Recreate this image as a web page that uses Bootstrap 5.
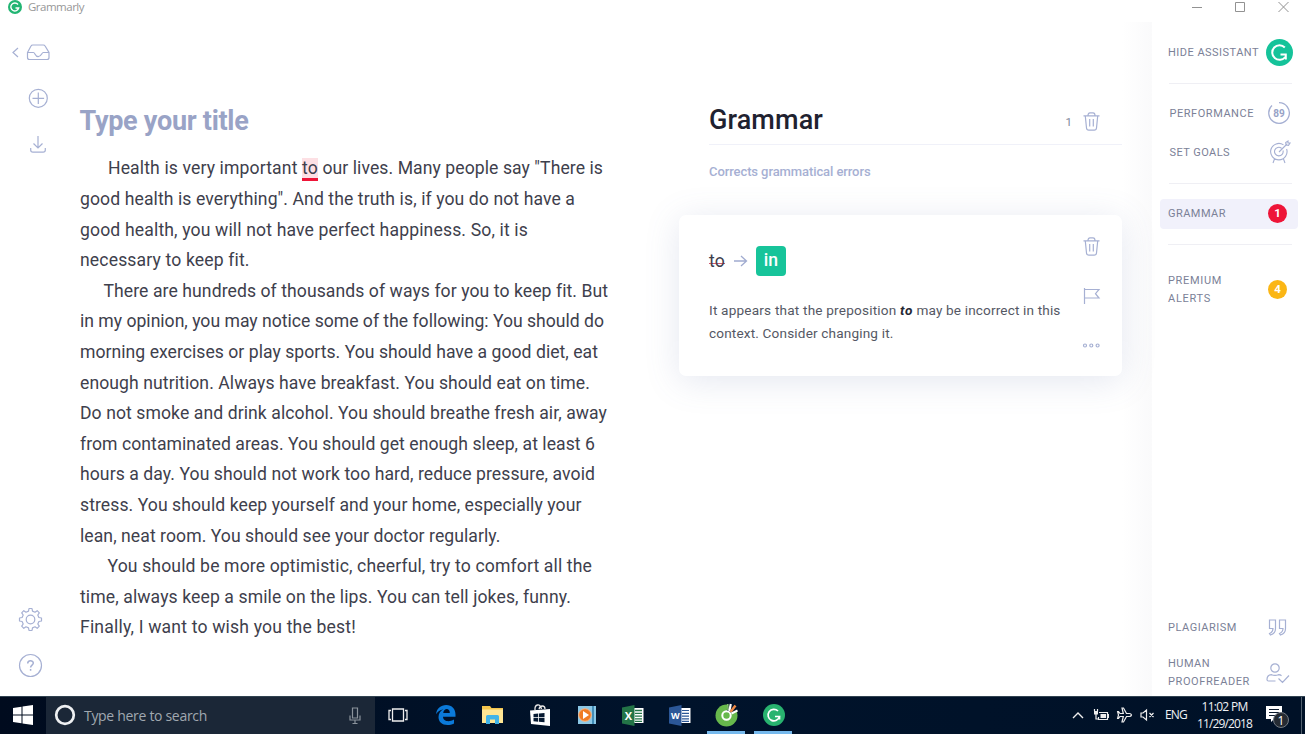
<!DOCTYPE html>
<html lang="en">
<head>
<meta charset="utf-8">
<title>Grammarly</title>
<link href="https://cdn.jsdelivr.net/npm/bootstrap@5.3.0/dist/css/bootstrap.min.css" rel="stylesheet">
<style>
:root{--lav:#a6b0d3;--ink:#3e404c}
body{font-family:Roboto,"Liberation Sans",sans-serif;width:1306px;height:734px;overflow:hidden;background:#fff;color:var(--ink)}
svg{display:block;flex:none;overflow:visible}
[data-w]{display:inline-block;white-space:pre}
.titlebar{height:22px;font:11.5px/14px "Open Sans",sans-serif;color:#979797;padding-left:8px}
.titlebar .wins{margin-right:17px}
.workspace{height:674px}
.rail{width:80px;padding-top:20px;color:var(--lav)}
.editor{width:599px}
.doc-title{font-weight:700;font-size:27px;line-height:32px;color:#99a3c6;margin:83px 0 0 -.5px}
.doc-line{height:30.6px;line-height:30.6px;font-size:17.6px;white-space:pre}
.doc-body{padding-top:16.4px}
.wrong{background:#fde0e4;border-bottom:3px solid #ee1538;line-height:20px;height:23px;vertical-align:baseline}
.panel{width:443px}
.panel-head{margin:81px 0 0 30px;height:42px;border-bottom:1px solid #f0f1f9}
.panel-head h1{font-size:27px;font-weight:500;line-height:34px;color:#1f2230;margin:0}
.panel-sub{font-size:13px;font-weight:500;line-height:20px;color:#a6b0d3;margin:17px 0 0 30px}
.alert-card{margin-top:33px;height:161px;border:0;border-radius:7px;box-shadow:0 5px 34px rgba(95,110,165,.17);padding:30px 22px 0 30px;background:#fff}
.fix{width:30px;height:30px;border-radius:4px;background:#17c49a;color:#fff;font-size:17.6px;font-weight:500;line-height:28px}
.struck{font-size:17.6px;line-height:24px;background:linear-gradient(#cf5872,#cf5872) 0 14px/100% 1px no-repeat}
.explain{font-size:13.6px;line-height:23px;color:#555864;margin-top:23px}
.fade-edge{width:30px;background:linear-gradient(90deg,#fff,#fafafb)}
.assistant{width:154px;font-size:11px;color:#7b8197}
.assistant [data-w]{padding-top:1px}
.rule{height:1px;background:#efeff4;margin:0 14px 0 17px}
.srow{padding-left:16px;padding-right:17px}
.count{width:19px;height:19px;border-radius:50%;color:#fff;font-size:11.5px;font-weight:700;line-height:19px}
.current{height:30px;margin:0 8px;background:#f1f1fb;border-radius:4px;padding:0 11px 1px 8px}
.stack{line-height:18px}
.stack [data-w]{padding-top:0}
.taskbar{height:38px;width:1305px;background:linear-gradient(90deg,#000b1e,#00132b 50%,#001127);border-top:1px solid #314351;color:#e8ebef;font-family:"Open Sans",sans-serif}
.searchbox{width:329px;height:37px;background:#1b2737;padding:0 14px 1px 8px;font-size:14px;color:#a0a8b0}
.app{width:46.9px;height:37px;padding:0 0 1px 1px}
.open i{position:absolute;left:4px;right:5px;bottom:0;height:3px;background:#76b9ed}
.tray{font-size:12px;line-height:17px;color:#f0f2f5;padding-bottom:2px}
</style>
</head>
<body>
<header class="titlebar d-flex align-items-start">
  <svg width="14" height="14" viewBox="0 0 14 14"><circle cx="7" cy="7" r="7" fill="#22b573"/><path d="M10 4.500A4 4 0 1 0 10.700 8H7.500" fill="none" stroke="#fff" stroke-width="1.400"/></svg>
  <span class="ms-1" style="padding-left:2px"><span data-w="56">Grammarly</span></span>
  <svg class="wins ms-auto" width="98" height="14" fill="none" stroke="#929292"><path d="M1 7.500h10M44.500 2.500h9v9h-9zM87.500 2l10 10m0-10-10 10"/></svg>
</header>

<main class="workspace d-flex">
  <nav class="rail d-flex flex-column">
    <svg width="50" height="20" viewBox="0 0 50 20" fill="none" stroke="currentColor" stroke-width="1.200"><path d="m18 6-5 4.500 5 4.500M27.500 10.500 31 4q.5-1 1.800-1h10.500q1.300 0 1.800 1l3.900 6.500v5q0 2-2 2H29.500q-2 0-2-2zh6c1.500 0 1.500 4.200 4.700 4.200s3.500-4.200 5-4.200h5.800"/></svg>
    <svg style="margin:26px 0 0 28px" width="20" height="20" fill="none" stroke="currentColor" stroke-width="1.200"><circle cx="10.300" cy="10.300" r="9"/><path d="M10.300 4.500v11.500M4.500 10.300h11.600"/></svg>
    <svg style="margin:27px 0 0 28px" width="20" height="20" fill="none" stroke="currentColor" stroke-width="1.200"><path d="M10 1v12M5.500 8.500 10 13l4.500-4.500M2.700 13v2q0 2.200 2.200 2.200h10.200q2.200 0 2.200-2.200v-2"/></svg>
    <svg class="mt-auto" style="margin-left:18px" width="25" height="25" viewBox="-12.500 -12.500 25 25" fill="none" stroke="currentColor" stroke-width="1.200"><circle r="4.300"/><path stroke-linejoin="round" d="M-2-8.400-1.500-11h3L2-8.400 4.500-7.300 6.700-8.800 8.800-6.700 7.300-4.500 8.400-2 11-1.500v3L8.400 2 7.300 4.500 8.800 6.700 6.700 8.800 4.500 7.300 2 8.400 1.500 11h-3L-2 8.400-4.500 7.300-6.700 8.800-8.800 6.700-7.300 4.500-8.400 2-11 1.500v-3L-8.400-2-7.300-4.500-8.800-6.700-6.700-8.800-4.500-7.300z"/></svg>
    <svg style="margin:21px 0 18px 18px" width="25" height="25" fill="none" stroke="currentColor" stroke-width="1.200"><circle cx="12.500" cy="12.500" r="11"/><path stroke-width="1.500" d="M9.700 10.500c0-3.500 5.600-3.500 5.600-.4 0 2-2.700 2-2.700 4.300M12.600 16v1.700"/></svg>
  </nav>

  <article class="editor">
    <h2 class="doc-title"><span data-w="169">Type your title</span></h2>
    <div class="doc-body">
      <div class="doc-line" style="padding-left:28px"><span data-w="194">Health is very important </span><span class="wrong" data-w="16">to</span><span data-w="285"> our lives. Many people say "There is</span></div>
      <div class="doc-line"><span data-w="495">good health is everything". And the truth is, if you do not have a</span></div>
      <div class="doc-line"><span data-w="448">good health, you will not have perfect happiness. So, it is</span></div>
      <div class="doc-line"><span data-w="169">necessary to keep fit.</span></div>
      <div class="doc-line" style="padding-left:23.500px"><span data-w="504">There are hundreds of thousands of ways for you to keep fit. But</span></div>
      <div class="doc-line"><span data-w="524">in my opinion, you may notice some of the following: You should do</span></div>
      <div class="doc-line"><span data-w="518">morning exercises or play sports. You should have a good diet, eat</span></div>
      <div class="doc-line"><span data-w="510">enough nutrition. Always have breakfast. You should eat on time.</span></div>
      <div class="doc-line"><span data-w="527">Do not smoke and drink alcohol. You should breathe fresh air, away</span></div>
      <div class="doc-line"><span data-w="515">from contaminated areas. You should get enough sleep, at least 6</span></div>
      <div class="doc-line"><span data-w="515">hours a day. You should not work too hard, reduce pressure, avoid</span></div>
      <div class="doc-line"><span data-w="501.500">stress. You should keep yourself and your home, especially your</span></div>
      <div class="doc-line"><span data-w="420.500">lean, neat room. You should see your doctor regularly.</span></div>
      <div class="doc-line" style="padding-left:27.500px"><span data-w="484.500">You should be more optimistic, cheerful, try to comfort all the</span></div>
      <div class="doc-line"><span data-w="491">time, always keep a smile on the lips. You can tell jokes, funny.</span></div>
      <div class="doc-line"><span data-w="276">Finally, I want to wish you the best!</span></div>
    </div>
  </article>

  <section class="panel">
    <div class="panel-head d-flex">
      <h1><span data-w="114">Grammar</span></h1>
      <span class="ms-auto" style="font-size:11.500px;line-height:38px;color:#7f879c;margin-right:11px">1</span>
      <svg style="margin:9px 22px 0 0" width="17" height="19" fill="none" stroke="#a6b0d3" stroke-width="1.200"><path id="bin" d="M.5 3.800h16M5 3.600q0-2.800 2-2.800h3q2 0 2 2.800M2.300 4 3.500 16q.2 2.200 2.300 2.200h5.400q2.100 0 2.300-2.200L14.700 4M6.700 7v7.500M10.300 7v7.500"/></svg>
    </div>
    <p class="panel-sub"><span data-w="161.500">Corrects grammatical errors</span></p>
    <div class="card alert-card">
      <div class="d-flex justify-content-between">
        <div>
          <div class="d-flex align-items-center">
            <span class="struck" data-w="16">to</span>
            <svg style="margin:1px 9px 0 9px" width="13" height="12" fill="none" stroke="#a0abd0" stroke-width="1.300"><path d="M0 6h12.500M7 1l5.500 5L7 11"/></svg>
            <span class="fix text-center" style="margin-top:1px">in</span>
          </div>
          <div class="explain"><span data-w="191">It appears that the preposition </span><b class="fst-italic" style="color:#252733"><span data-w="13">to</span></b><span data-w="147.500"> may be incorrect in this</span><br><span data-w="184.500">context. Consider changing it.</span></div>
        </div>
        <div class="d-flex flex-column" style="margin-top:-8px">
          <svg width="17" height="19" fill="none" stroke="#a6b0d3" stroke-width="1.200"><use href="#bin"/></svg>
          <svg style="margin-top:31px" width="17" height="18" fill="none" stroke="#a6b0d3" stroke-width="1.200"><path d="M1.500 1v16M1.500 2.500H16l-3.500 4.200L16 11H1.500"/></svg>
          <svg style="margin-top:37px" width="17" height="6" fill="none" stroke="#a6b0d3" stroke-width="1.200"><circle cx="2" cy="3.500" r="1.500"/><circle cx="8.300" cy="3.500" r="1.500"/><circle cx="14.600" cy="3.500" r="1.500"/></svg>
        </div>
      </div>
    </div>
  </section>

  <div class="fade-edge"></div>

  <aside class="assistant d-flex flex-column">
    <div class="srow d-flex justify-content-between align-items-center" style="height:61px;padding-right:13px">
      <span data-w="91">HIDE ASSISTANT</span>
      <svg width="27" height="27"><circle cx="13.500" cy="13.500" r="13.500" fill="#15c39a"/><path d="M18.800 8.500a7.300 7.300 0 1 0 .5 9.500M14.500 15.500h5.300v5" fill="none" stroke="#fff" stroke-width="2"/></svg>
    </div>
    <div class="rule"></div>
    <div class="srow d-flex justify-content-between align-items-center" style="height:59px;padding-left:17.500px;padding-right:16px">
      <span data-w="84.500">PERFORMANCE</span>
      <svg style="margin-top:-2px" width="22" height="22" fill="none" stroke="#a6b0d3"><path stroke-width="1.300" d="M11 .7A10.300 10.300 0 1 1 4 3.500"/><text x="11" y="14.500" text-anchor="middle" font-size="10" font-weight="700" fill="#98a3c7" stroke="none">89</text></svg>
    </div>
    <div class="srow d-flex justify-content-between align-items-center" style="height:20px;padding-left:17.500px;padding-right:16px">
      <span data-w="60.500">SET GOALS</span>
      <svg style="margin-top:-2px" width="20" height="22" fill="none" stroke="#a6b0d3" stroke-width="1.100"><path d="M13.500 3.900A8.200 8.200 0 1 0 16.600 8M11.500 7.200A4.300 4.300 0 1 0 13 9.500M9 11l8-8M16 4l-.3-2.500L18 0v2h2l-1.500 2.300zM4.500 18 3 22M13.500 18l1.500 4"/></svg>
    </div>
    <div class="rule" style="margin-top:20px"></div>
    <div class="current d-flex justify-content-between align-items-center" style="margin-top:15px">
      <span data-w="58">GRAMMAR</span><span class="count text-center" style="background:#ee1538">1</span>
    </div>
    <div class="rule" style="margin-top:15px;margin-left:16px"></div>
    <div class="srow d-flex justify-content-between align-items-center" style="padding-right:19px;margin-top:25px">
      <div class="stack" style="padding-top:2px"><span data-w="54">PREMIUM</span><br><span data-w="43">ALERTS</span></div><span class="count text-center" style="background:#fbb615">4</span>
    </div>
    <div class="srow d-flex justify-content-between align-items-center mt-auto" style="height:20px;padding-right:19px">
      <span data-w="69" style="padding-top:2px">PLAGIARISM</span>
      <svg width="19" height="17" fill="none" stroke="#a6b0d3" stroke-width="1.200"><path id="q" d="M1.500 1h6v8.500q0 5-5 6.500l-1-1.500Q5 13 5 9.500H1.500z"/><use href="#q" x="10"/></svg>
    </div>
    <div class="srow d-flex justify-content-between align-items-center" style="margin:18px 0 5px;height:36px">
      <div class="stack"><span data-w="42">HUMAN</span><br><span data-w="82">PROOFREADER</span></div>
      <svg width="23" height="21" fill="none" stroke="#a6b0d3" stroke-width="1.200"><circle cx="9" cy="5" r="4.200"/><path d="M9.500 18H2.500Q1 18 1 16.500 1 12 5.500 11.700q3.500 1.500 7 0 2 .1 3 1M12.500 15.500l4 4 6.500-7"/></svg>
    </div>
  </aside>
</main>

<footer class="taskbar d-flex">
  <div class="d-flex align-items-center" style="width:46px;padding:0 0 1px 13px"><svg width="20" height="20" fill="#fff"><path d="M0 3 8.500 1.800V9.500H0zM9.500 1.600 20 0v9.500H9.500zM0 10.500h8.500v7.700L0 17zM9.500 10.500H20V20L9.500 18.400z"/></svg></div>
  <div class="searchbox d-flex align-items-center">
    <svg width="22" height="22"><circle cx="11" cy="11" r="8.800" fill="none" stroke="#eef0f2" stroke-width="2.700"/></svg>
    <span style="margin-left:8px"><span data-w="123">Type here to search</span></span>
    <svg class="ms-auto" width="12" height="17" fill="none" stroke="#8b939c" stroke-width="1.200"><path d="M3.500 1h5v10h-5zM1 8.500V13h10V8.500M6 13v3.500M3.500 16.500h5"/></svg>
  </div>
  <div class="app d-flex align-items-center justify-content-center" style="padding-left:0"><svg width="20" height="14" fill="none" stroke="#eee" stroke-width="1.300"><path d="M4.500 1h11v12h-11zM3 2.500H1v9h2M17 2.500h2v9h-2"/></svg></div>
  <div class="app d-flex align-items-center justify-content-center"><svg width="20" height="20"><path fill="#0b7ad9" d="M0 9.200C.7 3.500 4.800 0 10.200 0 16 0 19.500 4 19.500 9.500v2.300H7c.2 5 6.500 5.500 11 2.700v4c-2 1-4.300 1.500-6.500 1.500C6 20 2.500 16.800 2.500 12c0-3.700 2-6.300 5-7.800C4 4.800 1.500 6.500 0 9.200zm7.200-1.300h6.600c0-5.300-6-4.800-6.600 0z"/></svg></div>
  <div class="app d-flex align-items-center justify-content-center"><svg width="21" height="18"><path fill="#f3c54d" d="M0 0h8l1.500 2H21v15H0z"/><path fill="#ffe694" d="M0 3.500h21V17H0z"/><path fill="#42b4e8" d="M4 18V10.500Q4 9 5.500 9h10q1.500 0 1.500 1.500V18h-4v-4.500H8V18z"/></svg></div>
  <div class="app d-flex align-items-center justify-content-center"><svg width="20" height="23"><path fill="#fff" d="M0 6.500 20 5v17L1 20z"/><path d="M5 6C4.500 0 10-1 11.500 5M9 5c1-4 6-4 6 0" fill="none" stroke="#e8e8e8" stroke-width="1.300"/><path fill="#071a32" d="m3.500 10 4.700-.4v3.600H3.500zM9 9.500l5.500-.5v4.200H9zM3.500 14h4.700v3.700l-4.700-.4zM9 14h5.500v4.200L9 17.800z"/></svg></div>
  <div class="app d-flex align-items-center justify-content-center"><svg width="20" height="19"><path fill="#8bc8e6" d="M1 0h18v18H1z"/><path fill="#438eb8" d="M15 0h2v18h-2z"/><circle cx="8" cy="9" r="6.300" fill="#f07b22" stroke="#f8b98b"/><path fill="#fff" d="m6 5 6 4-6 4z"/></svg></div>
  <div class="app d-flex align-items-center justify-content-center"><svg width="22" height="21"><path fill="#fff" d="M11 3h10.500v15H11z"/><path stroke="#237447" stroke-width="1.300" d="M13 5.500h7M13 8.300h7M13 11.100h7M13 13.900h7M13 16.300h7"/><path fill="#237447" d="M0 2.500 12.500 0v21L0 18.500z"/><text x="6.300" y="14.500" text-anchor="middle" fill="#fff" font-size="11" font-weight="700">X</text></svg></div>
  <div class="app d-flex align-items-center justify-content-center"><svg width="22" height="21"><path fill="#fff" d="M11 3h10.500v15H11z"/><path stroke="#2b5797" stroke-width="1.200" d="M13 5.500h7M13 8.300h7M13 11.100h7M13 13.900h7M13 16.300h7"/><path fill="#2b5797" d="M0 2.500 12.500 0v21L0 18.500z"/><text x="6.300" y="14" text-anchor="middle" fill="#fff" font-size="9" font-weight="700">W</text></svg></div>
  <div class="app open position-relative d-flex align-items-center justify-content-center"><svg width="24" height="24"><circle cx="11.500" cy="12.500" r="11" fill="#67b84c"/><path fill="#001229" d="m11.500 11.500 1-11.500H23v8.500z"/><circle cx="11.500" cy="12.500" r="4.200" fill="#67b84c" stroke="#fff" stroke-width="2"/><path d="m13 7-.2-6" stroke="#8ac973" stroke-width="1.500"/><path d="m14.300 8 1.500-7" stroke="#fff" stroke-width="2.200"/><path d="m15.500 9 5-6.500" stroke="#f08a45" stroke-width="2.500"/><path d="m16.500 10.500 6-3" stroke="#fff" stroke-width="2"/></svg><i></i></div>
  <div class="app open position-relative d-flex align-items-center justify-content-center"><svg width="22" height="22"><circle cx="11" cy="11" r="11" fill="#28b36f"/><path d="M15 7a5.800 5.800 0 1 0 1.500 5.500H12M16.500 12v3.500" fill="none" stroke="#fff" stroke-width="1.700"/></svg><i></i></div>
  <div class="tray d-flex align-items-center ms-auto">
    <svg width="12" height="8" fill="none" stroke="#eee" stroke-width="1.400"><path d="m1 7 5-5 5 5"/></svg>
    <svg style="margin-left:9px" width="16" height="12" fill="none" stroke="#eee" stroke-width="1.200"><path d="M6 3.500h8.500v7h-9V8"/><path fill="#eee" stroke="none" d="M7.500 5h5.500v4H7.500zM15 5h1v4h-1zM1 2h4v3.500H1z"/><path d="M1.500 0v2M4.500 0v2M3 5v5h2.500"/></svg>
    <svg style="margin-left:8px" width="15" height="16" fill="none" stroke="#eee" stroke-width="1.200"><path d="M14.500 8q-.5-1.500-2-1.500H9.500L6.500 1H5l1.300 5.500H3L1.500 4.500H.6L1.500 8l-.9 3.500h.9L3 9.500h3.300L5 15h1.500l3-5.500h3q1.500 0 2-1.500z"/></svg>
    <svg style="margin-left:8px" width="15" height="14" fill="none" stroke="#eee" stroke-width="1.200"><path d="M1 5h2L6.500 2v10L3 9H1zM9.500 5l4 4M13.500 5l-4 4"/></svg>
    <span style="margin-left:10px"><span data-w="22">ENG</span></span>
    <div class="text-center" style="margin-left:9px;width:57px"><span data-w="46">11:02 PM</span><br><span data-w="55">11/29/2018</span></div>
    <svg style="margin:3px 11px 0 13px" width="24" height="24"><path fill="#fff" d="M0 2h16v13h-8l-3 3v-3H0z"/><path stroke="#0b1a2d" d="M3 5.500h10M3 8.500h10M3 11.500h10"/><circle cx="15" cy="16" r="7.500" fill="#252b33" stroke="#737a83"/><text x="15" y="20.500" text-anchor="middle" fill="#fff" font-size="12">1</text></svg>
    <div style="width:1px;height:37px;background:#52606e;margin:2px 3px 0 0"></div>
  </div>
</footer>
<script src="https://cdn.jsdelivr.net/npm/bootstrap@5.3.0/dist/js/bootstrap.bundle.min.js"></script>
<script>
// Track each run of text to its column width.
document.querySelectorAll('[data-w]').forEach(function (el) {
  var want = parseFloat(el.dataset.w);
  var have = el.getBoundingClientRect().width;
  el.style.letterSpacing = ((want - have) / el.textContent.length) + 'px';
});
</script>
</body>
</html>
